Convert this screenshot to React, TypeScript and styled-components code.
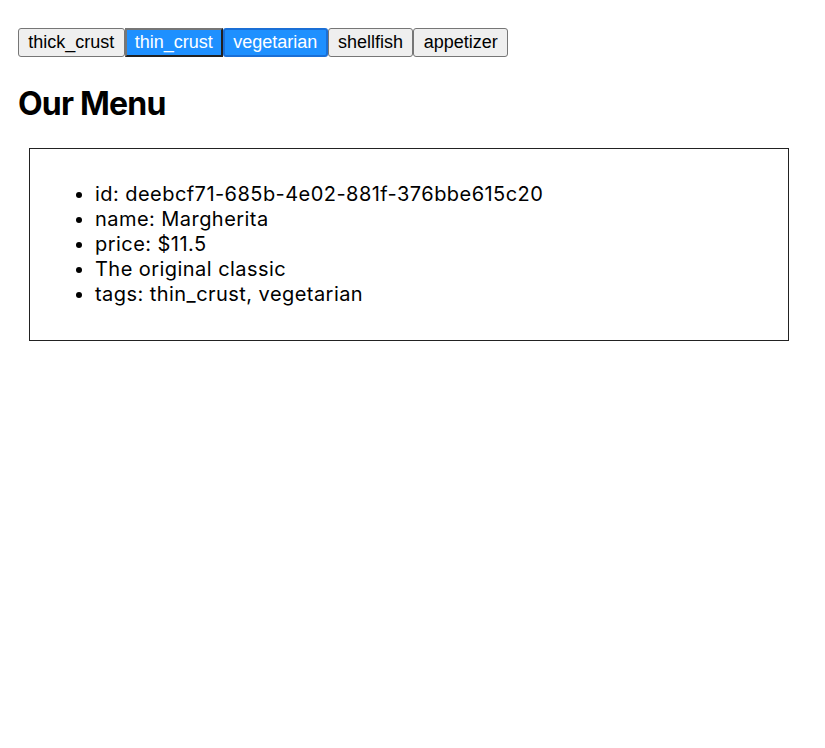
import React from "react";
import styled, { createGlobalStyle } from "styled-components";

const Global = createGlobalStyle`
  html, body { margin: 0; padding: 0; background: #fff; }
  body { font-family: Inter, "Noto Sans", sans-serif; color: #000; }
`;

const Page = styled.div`
  padding: 28px 18px;
`;

const FilterBar = styled.div`
  display: flex;
  align-items: flex-start;
`;

const FilterButton = styled.button<{ $active: boolean; $focused?: boolean }>`
  box-sizing: border-box;
  font-family: "Liberation Sans", Arial, sans-serif;
  font-size: 18px;
  line-height: 21px;
  height: 29px;
  margin: 0;
  padding: ${(p) => (p.$active ? (p.$focused ? "2px 8.5px" : "2px 8px") : "3px 9.3px")};
  color: ${(p) => (p.$active ? "#fff" : "#000")};
  background: ${(p) => (p.$active ? "#1e90ff" : "#efefef")};
  border: ${(p) =>
    p.$active
      ? p.$focused
        ? "2px solid #1a6fd6"
        : "2px outset #767676"
      : "1px solid #767676"};
  border-radius: ${(p) => (p.$active && !p.$focused ? "0" : "3px")};
  cursor: pointer;
`;

const Title = styled.h1`
  font-family: Inter, sans-serif;
  font-size: 32px;
  font-weight: 700;
  letter-spacing: -0.8px;
  margin: 27px 0 25px;
`;

const Card = styled.div`
  width: 760px;
  box-sizing: border-box;
  margin-left: 11px;
  border: 1px solid #222;
  padding: 13px 25px;
`;

const Fields = styled.ul`
  font-size: 20px;
  letter-spacing: 0.45px;
  margin: 20px 0;
  padding-left: 40px;
`;

const Field = styled.li`
  line-height: 25px;
`;

const tags = ["thick_crust", "thin_crust", "vegetarian", "shellfish", "appetizer"];
const active = ["thin_crust", "vegetarian"];

export default function App() {
  return (
    <Page>
      <Global />
      <FilterBar>
        {tags.map((t) => (
          <FilterButton key={t} $active={active.includes(t)} $focused={t === "vegetarian"}>
            {t}
          </FilterButton>
        ))}
      </FilterBar>
      <Title>Our Menu</Title>
      <Card>
        <Fields>
          <Field>id: deebcf71-685b-4e02-881f-376bbe615c20</Field>
          <Field>name: Margherita</Field>
          <Field>price: $11.5</Field>
          <Field>The original classic</Field>
          <Field>tags: thin_crust, vegetarian</Field>
        </Fields>
      </Card>
    </Page>
  );
}
